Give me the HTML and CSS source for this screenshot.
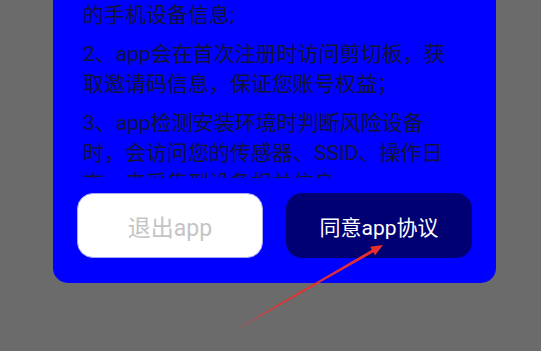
FILE: index.html
```html
<!DOCTYPE html>
<html lang="zh-CN">
<head>
<meta charset="utf-8">
<title>协议</title>
<link rel="stylesheet" href="styles.css">
</head>
<body>
<div class="screen">
  <div class="card">
    <div class="content">
      <p class="para"><span class="ln">的手机设备信息;</span></p>
      <p class="para"><span class="ln">2、app会在首次注册时访问剪切板，获</span><span class="ln">取邀请码信息，保证您账号权益；</span></p>
      <p class="para"><span class="ln">3、app检测安装环境时判断风险设备</span><span class="ln">时，会访问您的传感器、SSID、操作日</span><span class="ln">志，来采集到设备相关信息。</span></p>
    </div>
    <div class="actions">
      <button class="btn btn-exit">退出app</button>
      <button class="btn btn-agree">同意app协议</button>
    </div>
  </div>
  <svg class="arrow" width="541" height="351" viewBox="0 0 541 351">
    <defs>
      <linearGradient id="ag" x1="237" y1="329" x2="383" y2="245" gradientUnits="userSpaceOnUse">
        <stop offset="0" stop-color="#e8302e" stop-opacity="0.2"/>
        <stop offset="0.25" stop-color="#e8302e" stop-opacity="0.9"/>
        <stop offset="1" stop-color="#ea2f2b"/>
      </linearGradient>
    </defs>
    <polygon points="236.8,328.6 371.85,249.7 370.1,246.7 383,245 375.1,255.3 373.35,252.3 237.2,329.4" fill="url(#ag)"/>
  </svg>
</div>
</body>
</html>
```
FILE: styles.css
```css
html, body {
  margin: 0;
  padding: 0;
}
body {
  background: #6b6b6b;
  font-family: Roboto, "Noto Sans CJK SC", sans-serif;
}
.screen {
  position: relative;
  width: 541px;
  height: 351px;
  overflow: hidden;
}
.card {
  margin-left: 53px;
  width: 443px;
  height: 283px;
  background: #0000ff;
  border-radius: 0 0 15px 15px;
  display: flex;
  flex-direction: column;
}
.content {
  height: 178px;
  overflow: hidden;
  padding-left: 30px;
  color: #13133a;
  font-size: 21px;
  line-height: 30px;
  display: flex;
  flex-direction: column;
  gap: 9px;
}
.para {
  margin: 0;
  display: flex;
  flex-direction: column;
}
.ln {
  white-space: nowrap;
}
.actions {
  margin-top: 15px;
  padding-left: 24px;
  display: flex;
  gap: 23px;
}
.btn {
  width: 186px;
  height: 65px;
  border-radius: 16px;
  font-family: Roboto, "Noto Sans CJK SC", sans-serif;
  display: flex;
  align-items: center;
  justify-content: center;
  padding: 0;
}
.btn-exit {
  background: #ffffff;
  border: 1px solid #a9a9f2;
  color: #c4c4c4;
  font-size: 23px;
}
.btn-agree {
  background: #000072;
  border: none;
  color: #ffffff;
  font-size: 21px;
}
.arrow {
  position: absolute;
  left: 0;
  top: 0;
  pointer-events: none;
}
```
